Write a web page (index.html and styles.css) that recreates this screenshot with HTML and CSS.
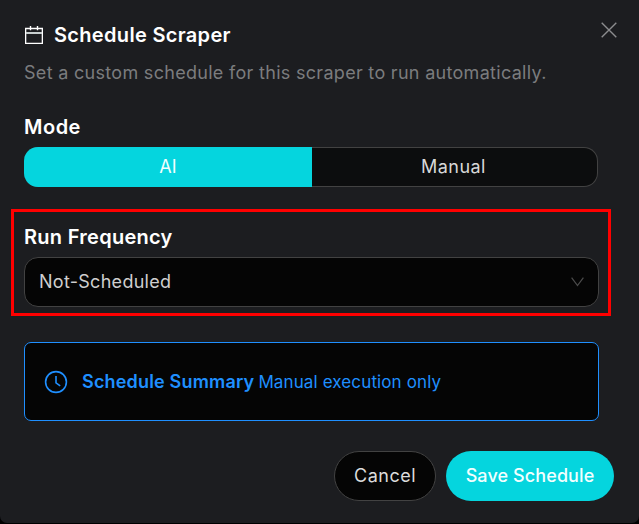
FILE: index.html
```html
<!DOCTYPE html>
<html lang="en">
<head>
<meta charset="utf-8">
<title>Schedule Scraper</title>
<link rel="stylesheet" href="styles.css">
</head>
<body>
<main class="dialog">
  <header class="header">
    <svg class="calendar" width="18" height="18" viewBox="0 0 18 18" fill="none" stroke="#fff"><path d="M.65 2.5h16.7v14.8H.65z" stroke-width="1.3"/><path d="M1 7h16" stroke="#c8cfcf" stroke-width="2"/><path d="M5.5 0v4.2M12.5 0v4.2" stroke-width="1.4"/></svg>
    <h1 class="title"><span class="t-title">Schedule Scraper</span></h1>
    <button class="close" aria-label="Close"><svg width="16" height="16" viewBox="0 0 16 16" fill="none" stroke="#8b8c8e" stroke-width="1.4"><path d="M.7.7l14.6 14.6M15.3.7.7 15.3"/></svg></button>
  </header>
  <p class="subtitle"><span class="t-sub">Set a custom schedule for this scraper to run automatically.</span></p>
  <h2 class="label mode-label"><span class="t-mode">Mode</span></h2>
  <div class="toggle">
    <button class="option active"><span class="t-ai">AI</span></button>
    <button class="option"><span class="t-manual">Manual</span></button>
  </div>
  <section class="frequency">
    <h2 class="label"><span class="t-freq">Run Frequency</span></h2>
    <div class="select">
      <span class="t-select">Not-Scheduled</span>
      <svg width="13" height="10" viewBox="0 0 13 10" fill="none" stroke="#4c4c4c" stroke-width="1.2"><path d="M.6.6l5.9 8 5.9-8"/></svg>
    </div>
  </section>
  <section class="summary">
    <svg width="24" height="24" viewBox="0 0 24 24" fill="none" stroke="#1f8fff" stroke-width="1.6"><circle cx="12" cy="12" r="10.4"/><path d="M12 6v6.8l4.2 3"/></svg>
    <strong><span class="t-summary">Schedule Summary</span></strong>
    <span class="t-exec">Manual execution only</span>
  </section>
  <footer class="footer">
    <button class="button cancel"><span class="t-cancel">Cancel</span></button>
    <button class="button save"><span class="t-save">Save Schedule</span></button>
  </footer>
</main>
</body>
</html>
```
FILE: styles.css
```css
* { box-sizing: border-box; }
body { margin: 0; background: #000; font-family: Inter, "Open Sans", sans-serif; font-size: 18px; color: #fff; overflow: hidden; }
span { white-space: nowrap; }
button { font: inherit; color: inherit; padding: 0; border: 0; background: none; }
h1, h2, p { margin: 0; }
svg { display: block; flex: none; }

.dialog { height: 523px; padding: 15px 40px 0 24px; background: #1c1d20; border-radius: 0 0 7px 7px; }
.header { display: flex; align-items: center; height: 40px; }
.calendar { margin: 0 0 0 1px; }
.title { flex: 1; margin-left: 11px; font-size: 20px; line-height: 40px; font-weight: 600; letter-spacing: .32px; }
.close { align-self: flex-start; margin: 7px -18px 0 0; width: 16px; height: 16px; }
.subtitle { height: 36px; line-height: 36px; color: #7b7c7e; letter-spacing: .3px; }
.label { height: 30px; line-height: 30px; font-size: 20px; font-weight: 600; letter-spacing: .28px; }
.mode-label { margin-top: 21px; letter-spacing: .5px; }

.toggle { display: flex; height: 40px; margin: 5px 1px 0 0; border: 1px solid #424242; border-left: 0; border-radius: 14px; background: #0c0d0e; }
.option { flex: 1; padding: 0 2px 2px 0; color: #d8d8d8; letter-spacing: .45px; }
.active { flex: 0 0 288px; margin: -1px 0; padding-right: 0; border-radius: 14px 0 0 14px; background: #05d5de; color: #f2ffff; letter-spacing: 0; }

.frequency { height: 107px; margin: 22px -12px 0 -13px; padding: 10px 9px 0 10px; border: 3px solid #f00; }
.select { display: flex; align-items: center; justify-content: space-between; height: 50px; margin-top: 5px; padding: 0 14px; border: 1px solid #424242; border-radius: 14px; background: #050505; color: #cfcfcf; }
.t-select { padding-bottom: 2px; letter-spacing: .28px; }

.summary { display: flex; align-items: center; height: 79px; margin-top: 26px; padding: 0 19px; border: 1px solid #1f8fff; border-radius: 7px; background: #050505; color: #1f8fff; }
.summary strong { margin: 0 4px 0 14px; font-weight: 600; letter-spacing: .18px; }
.t-exec { font-size: 17px; letter-spacing: .12px; }

.footer { display: flex; justify-content: flex-end; gap: 10px; margin: 30px -15px 0 0; }
.button { height: 50px; padding-bottom: 2px; border-radius: 25px; }
.cancel { width: 102px; border: 1px solid #424242; background: #050505; color: #dcdcdc; letter-spacing: .5px; }
.save { width: 168px; background: #05d5de; color: #f2ffff; font-weight: 500; letter-spacing: .1px; }
```
